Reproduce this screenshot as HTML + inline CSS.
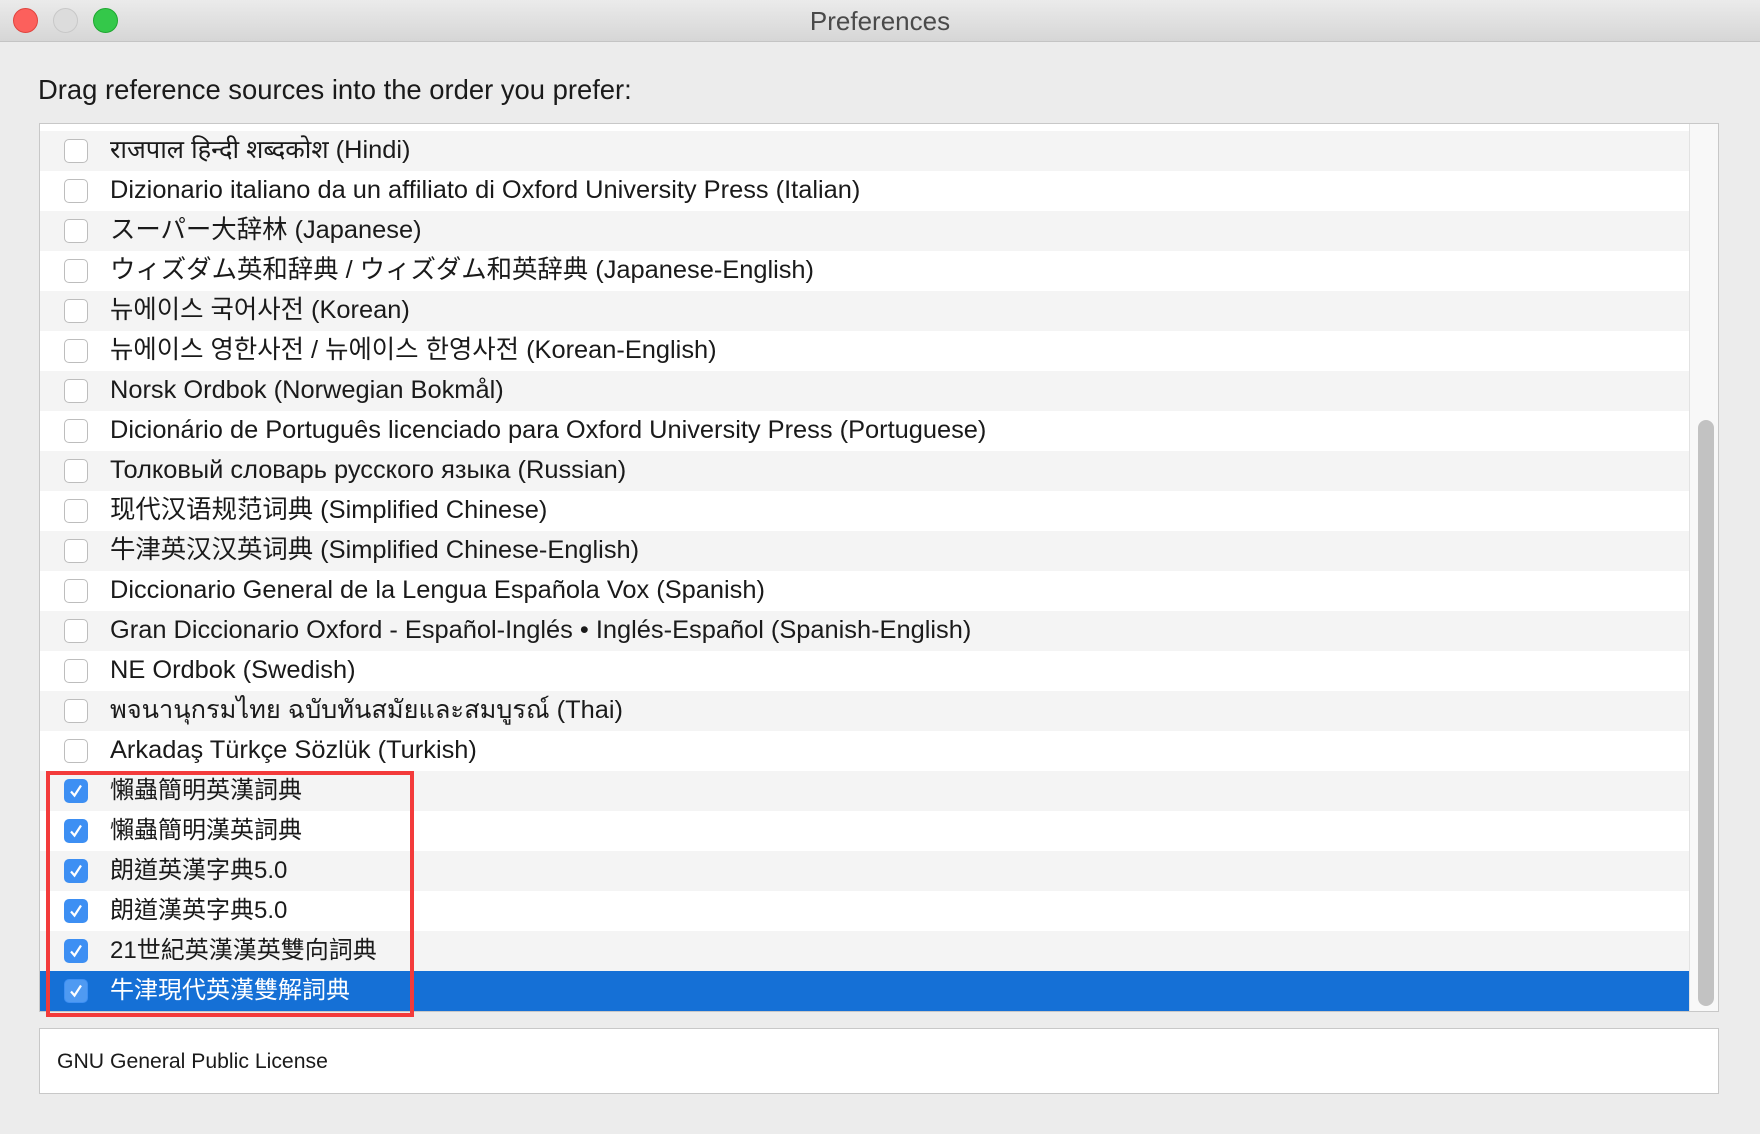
<!DOCTYPE html><html><head><meta charset="utf-8"><style>
*{margin:0;padding:0;box-sizing:border-box}
body{width:1760px;height:1134px;background:#ececec;font-family:"Liberation Sans","Noto Sans CJK TC",sans-serif;position:relative;overflow:hidden;color:#1a1a1a}
.tb{position:absolute;left:0;top:0;width:1760px;height:42px;background:linear-gradient(#ebebeb,#d6d6d6);border-bottom:1px solid #c4c4c4;text-align:center;font-size:26px;line-height:43px;color:#4a4a4a}
.tl{position:absolute;top:8px;width:25px;height:25px;border-radius:50%}
.lbl{position:absolute;left:38px;top:74px;font-size:27.4px}
.list{position:absolute;left:39px;top:123px;width:1680px;height:889px;background:#fff;border:1px solid #c8c8c8;overflow:hidden}
.row{position:absolute;left:0;width:1649px;height:40px;font-size:25.4px;line-height:39px;padding-left:70px;white-space:nowrap}
.cjk{font-size:24px}
.row.g{background:#f4f4f4}
.cb{position:absolute;left:24px;top:8px;width:24px;height:24px;border:1px solid #bdbdbd;border-radius:5px;background:#fff}
.cb.on{background:#3d8ff3;border-color:#3d8ff3}
.cb.on svg{position:absolute;left:3px;top:3px}
.sel{background:#1570d6!important;color:#fff}
.sb{position:absolute;left:1649px;top:0;width:30px;height:889px;background:#f8f8f8;border-left:1px solid #e2e2e2}
.th{position:absolute;left:8px;top:296px;width:16px;height:586px;border-radius:8px;background:#c2c2c2}
.red{position:absolute;left:46px;top:771px;width:368px;height:246px;border:4px solid #f33b3b}
.foot{position:absolute;left:39px;top:1028px;width:1680px;height:66px;background:#fff;border:1px solid #c8c8c8;font-size:21.2px;line-height:66px;padding-left:17px}
</style></head><body>
<div class="tb">Preferences</div>
<div class="tl" style="left:13px;background:#fc605c;border:1px solid #e0443e"></div>
<div class="tl" style="left:53px;background:#dcdcdc;border:1px solid #c8c8c8"></div>
<div class="tl" style="left:93px;background:#34c84a;border:1px solid #1ea830"></div>
<div class="lbl">Drag reference sources into the order you prefer:</div>
<div class="list">
<div class="row g" style="top:7px"><span class="cb"></span>राजपाल हिन्दी शब्दकोश (Hindi)</div>
<div class="row" style="top:47px"><span class="cb"></span>Dizionario italiano da un affiliato di Oxford University Press (Italian)</div>
<div class="row g" style="top:87px"><span class="cb"></span>スーパー大辞林 (Japanese)</div>
<div class="row" style="top:127px"><span class="cb"></span>ウィズダム英和辞典 / ウィズダム和英辞典 (Japanese-English)</div>
<div class="row g" style="top:167px"><span class="cb"></span>뉴에이스 국어사전 (Korean)</div>
<div class="row" style="top:207px"><span class="cb"></span>뉴에이스 영한사전 / 뉴에이스 한영사전 (Korean-English)</div>
<div class="row g" style="top:247px"><span class="cb"></span>Norsk Ordbok (Norwegian Bokmål)</div>
<div class="row" style="top:287px"><span class="cb"></span>Dicionário de Português licenciado para Oxford University Press (Portuguese)</div>
<div class="row g" style="top:327px"><span class="cb"></span>Толковый словарь русского языка (Russian)</div>
<div class="row" style="top:367px"><span class="cb"></span>现代汉语规范词典 (Simplified Chinese)</div>
<div class="row g" style="top:407px"><span class="cb"></span>牛津英汉汉英词典 (Simplified Chinese-English)</div>
<div class="row" style="top:447px"><span class="cb"></span>Diccionario General de la Lengua Española Vox (Spanish)</div>
<div class="row g" style="top:487px"><span class="cb"></span>Gran Diccionario Oxford - Español-Inglés • Inglés-Español (Spanish-English)</div>
<div class="row" style="top:527px"><span class="cb"></span>NE Ordbok (Swedish)</div>
<div class="row g" style="top:567px"><span class="cb"></span>พจนานุกรมไทย ฉบับทันสมัยและสมบูรณ์ (Thai)</div>
<div class="row" style="top:607px"><span class="cb"></span>Arkadaş Türkçe Sözlük (Turkish)</div>
<div class="row g cjk" style="top:647px"><span class="cb on"><svg width="16" height="16"><path d="M3 8.5l3.5 4L13 2.5" stroke="#fff" stroke-width="2.2" fill="none"/></svg></span>懶蟲簡明英漢詞典</div>
<div class="row cjk" style="top:687px"><span class="cb on"><svg width="16" height="16"><path d="M3 8.5l3.5 4L13 2.5" stroke="#fff" stroke-width="2.2" fill="none"/></svg></span>懶蟲簡明漢英詞典</div>
<div class="row g cjk" style="top:727px"><span class="cb on"><svg width="16" height="16"><path d="M3 8.5l3.5 4L13 2.5" stroke="#fff" stroke-width="2.2" fill="none"/></svg></span>朗道英漢字典5.0</div>
<div class="row cjk" style="top:767px"><span class="cb on"><svg width="16" height="16"><path d="M3 8.5l3.5 4L13 2.5" stroke="#fff" stroke-width="2.2" fill="none"/></svg></span>朗道漢英字典5.0</div>
<div class="row g cjk" style="top:807px"><span class="cb on"><svg width="16" height="16"><path d="M3 8.5l3.5 4L13 2.5" stroke="#fff" stroke-width="2.2" fill="none"/></svg></span>21世紀英漢漢英雙向詞典</div>
<div class="row sel cjk" style="top:847px"><span class="cb on" style="background:#4f9af2"><svg width="16" height="16"><path d="M3 8.5l3.5 4L13 2.5" stroke="#fff" stroke-width="2.2" fill="none"/></svg></span>牛津現代英漢雙解詞典</div>
<div class="sb"><div class="th"></div></div>
</div>
<div class="red"></div>
<div class="foot">GNU General Public License</div>
</body></html>
